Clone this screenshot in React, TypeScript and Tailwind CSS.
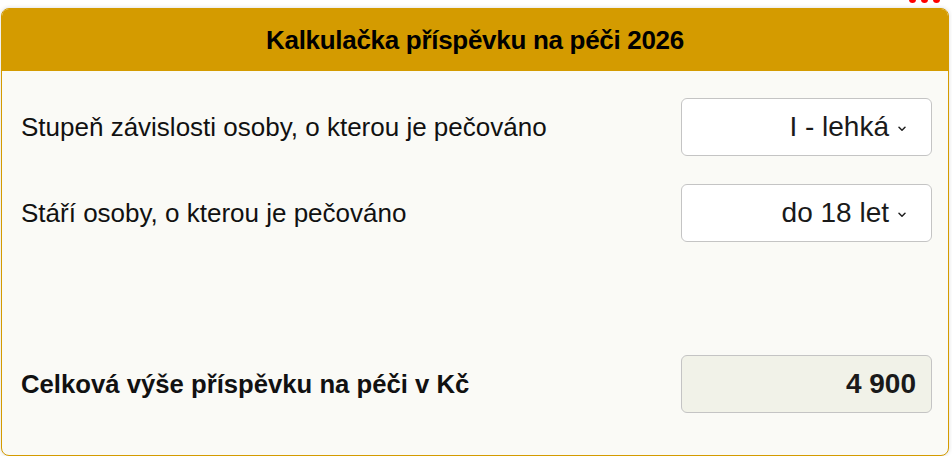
import React from 'react';

const Chevron: React.FC = () => (
  <svg width="8" height="6" viewBox="0 0 8 6" className="ml-[9px] mt-[4px]" fill="none">
    <path d="M1 1.3 L4 4.3 L7 1.3" stroke="#222" strokeWidth="1.5" strokeLinecap="round" strokeLinejoin="round" />
  </svg>
);

const SelectBox: React.FC<{ value: string }> = ({ value }) => (
  <div className="w-[251px] h-[58px] flex items-center justify-end pr-[25px] bg-white border border-[#c4c4c4] rounded-[6px] text-[28px] text-[#1a1a1a]">
    <span>{value}</span>
    <Chevron />
  </div>
);

export default function App() {
  return (
    <div className="relative w-[952px] h-[456px] bg-white overflow-hidden" style={{ fontFamily: '"Liberation Sans", Arial, sans-serif' }}>
      <div className="absolute right-[12px] top-[-4px] flex gap-[5px]">
        <span className="w-[7px] h-[7px] rounded-full bg-[#f00]" />
        <span className="w-[7px] h-[7px] rounded-full bg-[#f00]" />
        <span className="w-[7px] h-[7px] rounded-full bg-[#f00]" />
      </div>
      <div className="ml-[1px] mr-[3px] mt-[8px] h-[448px] flex flex-col border border-[#d49b00] rounded-[8px] overflow-hidden bg-[#fafaf6] shadow-[0_0_4px_rgba(0,0,0,0.15)]">
        <div className="h-[62px] shrink-0 bg-[#d49b00] flex items-center justify-center">
          <h1 className="text-[26px] font-bold text-black tracking-[-0.3px]">Kalkulačka příspěvku na péči 2026</h1>
        </div>
        <div className="flex flex-col pl-[19px] pr-[16px] pt-[27px]">
          <div className="flex items-center justify-between">
            <span className="text-[26px] text-[#111]">Stupeň závislosti osoby, o kterou je pečováno</span>
            <SelectBox value="I - lehká" />
          </div>
          <div className="flex items-center justify-between mt-[28px]">
            <span className="text-[26px] text-[#111]">Stáří osoby, o kterou je pečováno</span>
            <SelectBox value="do 18 let" />
          </div>
          <div className="flex items-center justify-between mt-[113px]">
            <span className="text-[25.7px] font-bold text-[#111]">Celková výše příspěvku na péči v Kč</span>
            <div className="w-[251px] h-[58px] flex items-center justify-end pr-[15px] bg-[#f1f2e8] border border-[#c4c4c4] rounded-[6px] text-[28px] font-bold text-[#1a1a1a]">
              4 900
            </div>
          </div>
        </div>
      </div>
    </div>
  );
}
